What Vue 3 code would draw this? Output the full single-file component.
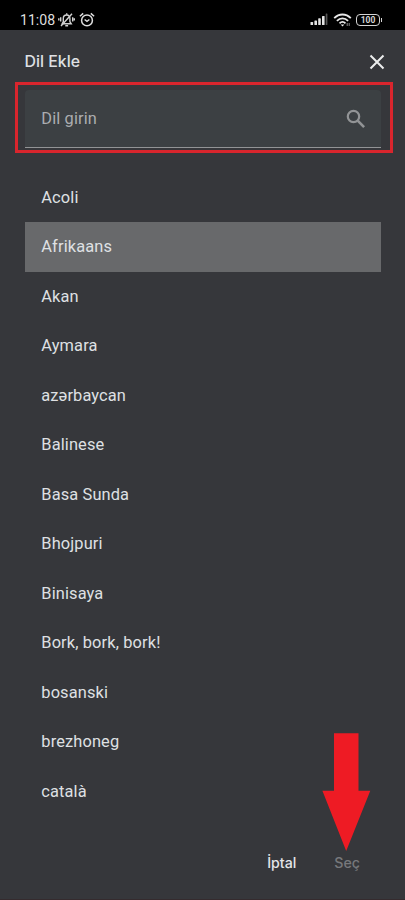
<script setup>
const languages = [
  'Acoli', 'Afrikaans', 'Akan', 'Aymara', 'azərbaycan', 'Balinese', 'Basa Sunda',
  'Bhojpuri', 'Binisaya', 'Bork, bork, bork!', 'bosanski', 'brezhoneg', 'català',
]
const selected = 'Afrikaans'
</script>

<template>
  <div class="screen">
    <header class="status">
      <span class="time">11:08</span>
      <svg class="bell" width="17" height="16" viewBox="0 0 17 16" fill="none" stroke="#d2d2d2" stroke-width="1.4">
        <path d="M4.2 11.7h9l-1.3-2V6.4C11.9 4.2 10.7 3 8.7 3S5.3 4.2 5.3 6.4v3.3z" />
        <path d="M7.3 13.7h2.8M8.7 1.3v1.5M2.7 5.3v4.2M14.7 5.3v4.2M.8 6.3v2.2M16.3 6.3v2.2M3 14 14 1.7" />
      </svg>
      <svg class="alarm" width="16" height="16" viewBox="0 0 16 16" fill="none" stroke="#dedede" stroke-width="1.5">
        <circle cx="8" cy="8.4" r="5.4" />
        <path d="M.9 4.3 4.2 1.4M15.1 4.3l-3.3-2.9M5.6 7.5 8 9.3l2.4-1.8" />
      </svg>
      <svg class="signal" width="19" height="13" viewBox="0 0 19 13" fill="#e4e4e4">
        <rect x=".5" y="9" width="2.6" height="3" rx=".6" />
        <rect x="4.4" y="7.5" width="2.6" height="4.5" rx=".6" />
        <rect x="8.2" y="5.3" width="2.6" height="6.7" rx=".6" />
        <rect x="12" y="3" width="2.6" height="9" rx=".6" />
        <rect x="15.7" y=".5" width="1.7" height="11.5" rx=".6" fill="#555" />
      </svg>
      <svg class="wifi" width="19" height="14" viewBox="0 0 19 14" fill="none" stroke="#e8e8e8" stroke-width="1.8">
        <path d="M1.2 5.1C6 .3 13 .3 17.8 5.1M3.9 7.8c3.3-3.2 7.9-3.2 11.2 0M6.5 10.3c1.8-1.7 4.2-1.7 6 0" />
        <path d="m7.7 11.5 1.8 1.9 1.8-1.9z" fill="#e8e8e8" stroke="none" />
        <path d="M14.2 10v3M16.2 10v3" stroke-width="1" stroke="#888" />
      </svg>
      <span class="battery">100</span>
    </header>

    <div class="title">
      <h1>Dil Ekle</h1>
      <svg width="16" height="16" viewBox="0 0 16 16" fill="none" stroke="#eceded" stroke-width="2">
        <path d="m1.5 1.5 13 13M14.5 1.5l-13 13" />
      </svg>
    </div>

    <div class="highlight">
      <div class="field">
        <span>Dil girin</span>
        <svg width="20" height="20" viewBox="0 0 20 20" fill="none" stroke="#929496" stroke-width="2.2">
          <circle cx="7.5" cy="7.5" r="5.7" />
          <path d="m11.7 11.7 6.4 6.4" stroke-width="2.6" />
        </svg>
      </div>
    </div>

    <ul class="list">
      <li v-for="name in languages" :key="name" :class="{ selected: name === selected }">{{ name }}</li>
    </ul>

    <footer class="actions">
      <span class="cancel">İptal</span>
      <span class="choose">Seç</span>
    </footer>

    <svg class="arrow" width="49" height="119" viewBox="0 0 49 119">
      <path d="M12 .3h24.5v57.5h11.8L24.2 118 .4 57.8H12z" fill="#ee1b24" />
    </svg>
  </div>
</template>

<style>
body {
  background: #36373b;
}
</style>

<style scoped>
.screen {
  position: relative;
  box-sizing: border-box;
  width: 405px;
  height: 900px;
  overflow: hidden;
  display: flex;
  flex-direction: column;
  background: #36373b;
  border-bottom: 1px solid #352b2e;
  font-family: Roboto, sans-serif;
  color: #dfe0e3;
}
.status {
  box-sizing: border-box;
  flex: none;
  height: 30px;
  padding: 9px 24px 0 20px;
  display: flex;
  align-items: center;
  background: #000;
}
.time {
  width: 35px;
  font-size: 14.1px;
  line-height: 20px;
  white-space: nowrap;
  color: #dedede;
}
.bell {
  margin-left: 2.5px;
}
.alarm {
  margin-left: 4px;
}
.signal {
  margin-left: auto;
}
.wifi {
  margin-left: 4px;
}
.battery {
  position: relative;
  box-sizing: border-box;
  width: 24px;
  height: 12px;
  margin-left: 4px;
  margin-right: 1px;
  border: 1.5px solid #d4d4d4;
  border-radius: 4px;
  font-size: 8.5px;
  font-weight: 700;
  line-height: 10px;
  text-align: center;
  color: #d4d4d4;
}
.battery::after {
  content: '';
  position: absolute;
  right: -3px;
  top: 3px;
  width: 1.5px;
  height: 4px;
  background: #d4d4d4;
}
.title {
  flex: none;
  height: 52px;
  padding: 0 20.5px 0 24.5px;
  display: flex;
  align-items: center;
  justify-content: space-between;
}
.title svg {
  margin-top: 12px;
}
h1 {
  margin: 11px 0 0;
  font-family: Inter, Roboto, sans-serif;
  font-size: 15.9px;
  font-weight: 500;
  line-height: 24px;
}
.highlight {
  box-sizing: border-box;
  flex: none;
  width: 378px;
  height: 71px;
  margin-left: 14.5px;
  padding: 5px 8.5px 0 7.5px;
  border: 3px solid #d9252d;
}
.field {
  box-sizing: border-box;
  height: 58px;
  padding: 0 15.5px 0 16.3px;
  display: flex;
  align-items: center;
  justify-content: space-between;
  border-bottom: 1px solid #929496;
  border-radius: 4px 4px 0 0;
  background: #3c4043;
  font-size: 16.4px;
  letter-spacing: .13px;
  color: #abadb0;
}
.list {
  flex: none;
  margin: 19.5px 24.5px 0 25px;
  padding: 0;
  list-style: none;
}
.list li {
  height: 49.5px;
  padding-left: 16.3px;
  font-size: 16.4px;
  letter-spacing: .13px;
  line-height: 49.5px;
}
.list .selected {
  background: #68696b;
}
.actions {
  display: flex;
  justify-content: flex-end;
  gap: 38px;
  padding: 35px 45px 0 0;
  font-family: Inter, Roboto, sans-serif;
  font-size: 14.2px;
  font-weight: 500;
  line-height: 24px;
}
.cancel {
  color: #e4e5e8;
}
.choose {
  color: #77787b;
}
.arrow {
  position: absolute;
  left: 321.5px;
  top: 733px;
}
</style>
